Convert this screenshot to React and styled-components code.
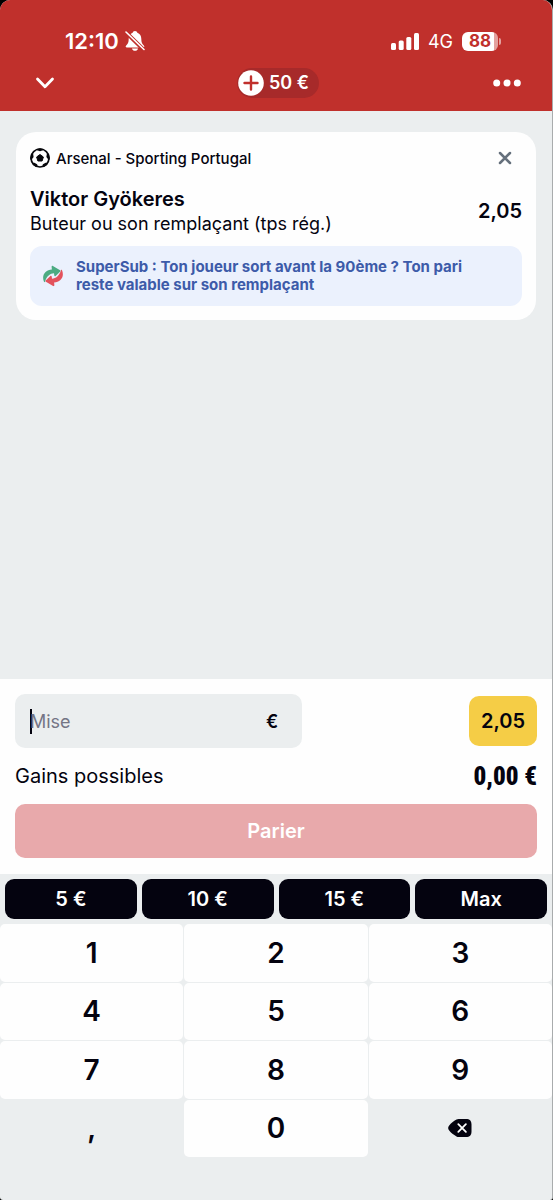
import React, { useState } from "react";
import styled, { createGlobalStyle, css } from "styled-components";

const colors = {
  red: "#c0302c",
  redDark: "#a72a2a",
  ink: "#04030f",
  grey: "#ebeeef",
  white: "#fefefe",
  slate: "#65707c",
  blue: "#3d5ba9",
  blueLight: "#ebf1fd",
  yellow: "#f5cd46",
  pink: "#e8a9ab",
};

const GlobalStyle = createGlobalStyle`
  *, *::before, *::after {
    box-sizing: border-box;
  }

  body {
    margin: 0;
    background: #000;
    color: ${colors.ink};
    font-family: Inter, "Liberation Sans", sans-serif;
  }

  button, input {
    font: inherit;
    color: inherit;
    border: 0;
    padding: 0;
    margin: 0;
    background: none;
  }

  button {
    cursor: pointer;
  }

  h2, p {
    margin: 0;
  }
`;

const flexCenter = css`
  display: flex;
  align-items: center;
  justify-content: center;
`;

const Screen = styled.div`
  display: flex;
  flex-direction: column;
  min-height: 100vh;
  overflow: hidden;
  background: ${colors.grey};
  border-right: 1px solid #a9acad;
  border-radius: 10px 10px 3px 3px;
`;

const Header = styled.header`
  background: ${colors.red};
  color: #fff;
  padding-top: 28px;
`;

const StatusBar = styled.div`
  display: flex;
  align-items: center;
  justify-content: space-between;
  height: 26px;
  padding: 0 54px 0 65px;
`;

const StatusGroup = styled.div`
  display: flex;
  align-items: center;
  gap: ${({ $gap }) => $gap}px;
`;

const Clock = styled.span`
  font-size: 22px;
  font-weight: 600;
`;

const Network = styled.span`
  font-size: 18px;
`;

const Battery = styled.span`
  ${flexCenter};
  position: relative;
  width: 36px;
  height: 19px;
  border-radius: 6px;
  background: linear-gradient(to right, #fff 32px, #e3a19f 32px);
  color: ${colors.red};
  font-size: 17px;
  font-weight: 700;

  &::after {
    content: "";
    position: absolute;
    right: -3px;
    top: 6px;
    width: 2px;
    height: 7px;
    border-radius: 0 2px 2px 0;
    background: #e3a19f;
  }
`;

const NavBar = styled.nav`
  display: grid;
  grid-template-columns: 1fr auto 1fr;
  align-items: center;
  height: 57px;
  padding: 0 31px 0 35px;
`;

const IconButton = styled.button`
  display: flex;
  justify-self: ${({ $end }) => ($end ? "end" : "start")};
  color: ${({ $muted }) => ($muted ? colors.slate : "inherit")};
`;

const Balance = styled.button`
  display: flex;
  align-items: center;
  gap: 5px;
  height: 30px;
  padding: 0 10px 0 1px;
  border-radius: 15px;
  background: ${colors.redDark};
  font-size: 18px;
  font-weight: 600;
`;

const Main = styled.main`
  flex: 1;
  padding: 21px 16px;
`;

const Card = styled.article`
  padding: 14px;
  border-radius: 20px;
  background: ${colors.white};
`;

const CardHeader = styled.div`
  display: flex;
  align-items: center;
  gap: 6px;
  height: 24px;
  padding-right: 10px;
  font-size: 15px;
  font-weight: 500;
`;

const Match = styled.span`
  flex: 1;
`;

const Selection = styled.div`
  display: flex;
  align-items: center;
  justify-content: space-between;
  padding: 16px 0 10px;
`;

const Player = styled.h2`
  font-size: 20px;
  line-height: 26px;
  font-weight: 600;
`;

const Market = styled.p`
  font-size: 18px;
  line-height: 24px;
`;

const Odds = styled.strong`
  font-size: 20px;
  font-weight: 600;
`;

const Info = styled.div`
  display: flex;
  align-items: center;
  gap: 12px;
  min-height: 60px;
  padding: 10px 32px 10px 12px;
  border-radius: 12px;
  background: ${colors.blueLight};
  color: ${colors.blue};
  font-size: 15px;
  line-height: 18px;
  font-weight: 700;

  svg {
    flex: none;
  }
`;

const Slip = styled.section`
  padding: 15px 15px 16px;
  background: ${colors.white};
`;

const StakeRow = styled.div`
  display: flex;
  align-items: center;
  justify-content: space-between;
`;

const StakeField = styled.label`
  display: flex;
  align-items: center;
  width: 55%;
  height: 54px;
  padding: 0 24px 0 15px;
  border-radius: 10px;
  background: ${colors.grey};
  font-size: 18px;
  font-weight: 600;
`;

const Caret = styled.span`
  width: 2px;
  height: 25px;
  margin-right: -2px;
  background: ${colors.ink};
`;

const StakeInput = styled.input`
  flex: 1;
  min-width: 0;
  outline: none;
  font-weight: 400;

  &::placeholder {
    color: #747585;
    opacity: 1;
  }
`;

const TotalOdds = styled.strong`
  ${flexCenter};
  min-width: 68px;
  height: 50px;
  border-radius: 10px;
  background: ${colors.yellow};
  font-size: 20px;
  font-weight: 600;
`;

const GainsRow = styled.div`
  display: flex;
  align-items: center;
  justify-content: space-between;
  height: 56px;
  font-size: 20px;
`;

const Gains = styled.output`
  font-family: "Roboto Condensed", "Open Sans Condensed", "Noto Sans Condensed",
    Roboto, sans-serif;
  font-size: 25px;
  font-weight: 900;
`;

const BetButton = styled.button`
  width: 100%;
  height: 54px;
  border-radius: 10px;
  background: ${colors.pink};
  color: #fff;
  font-size: 20px;
  font-weight: 600;
`;

const Keyboard = styled.section`
  padding-bottom: 43px;
`;

const QuickRow = styled.div`
  display: grid;
  grid-template-columns: repeat(4, 1fr);
  gap: 5px;
  padding: 5px;
`;

const QuickButton = styled.button`
  height: 40px;
  border-radius: 9px;
  background: ${colors.ink};
  color: #fff;
  font-size: 20px;
  font-weight: 600;
`;

const Keys = styled.div`
  display: grid;
  grid-template-columns: repeat(3, 1fr);
  grid-template-rows: repeat(4, 1fr);
  gap: 1px;
  height: 233px;
`;

const Key = styled.button`
  ${flexCenter};
  border-radius: 5px;
  background: ${({ $plain }) => ($plain ? "transparent" : colors.white)};
  font-size: 28px;
  font-weight: 600;
`;

const BellOff = () => (
  <svg width="20" height="22" viewBox="0 0 20 22" aria-hidden="true">
    <path
      d="M10 1c-1.300 0-2.100.8-2.300 1.700C5 3.700 3.700 6 3.700 8.700c0 3.900-.9 5.300-2.500 6.700-1 .9-.6 2 .7 2h16.200c1.300 0 1.700-1.100.7-2-1.600-1.400-2.500-2.800-2.500-6.700 0-2.700-1.300-5-4-6C12.100 1.800 11.300 1 10 1z"
      fill="#fff"
    />
    <path d="M7 18.500h6c-.3 1.500-1.500 2.300-3 2.300s-2.700-.8-3-2.300z" fill="#fff" />
    <path d="M0 1.500l19 18.500" stroke={colors.red} strokeWidth="4" />
    <path d="M1 2l18 17.500" stroke="#fff" strokeWidth="1.600" strokeLinecap="round" />
  </svg>
);

const Signal = () => (
  <svg width="28" height="17" viewBox="0 0 28 17" fill="#fff" aria-hidden="true">
    <rect x="0" y="10" width="5" height="7" rx="1.500" />
    <rect x="7.700" y="7.500" width="5" height="9.500" rx="1.500" />
    <rect x="15.300" y="4" width="5" height="13" rx="1.500" />
    <rect x="23" y="0" width="5" height="17" rx="1.500" />
  </svg>
);

const ChevronDown = () => (
  <svg width="20" height="12" viewBox="0 0 20 12" fill="none" aria-hidden="true">
    <path
      d="M2.500 2l7.500 7.800L17.500 2"
      stroke="#fff"
      strokeWidth="2.800"
      strokeLinecap="round"
      strokeLinejoin="round"
    />
  </svg>
);

const Dots = () => (
  <svg width="28" height="8" viewBox="0 0 28 8" fill="#fff" aria-hidden="true">
    <circle cx="3.700" cy="4" r="3.500" />
    <circle cx="14" cy="4" r="3.500" />
    <circle cx="24.300" cy="4" r="3.500" />
  </svg>
);

const PlusCircle = () => (
  <svg width="26" height="26" viewBox="0 0 26 26" aria-hidden="true">
    <circle cx="13" cy="13" r="12.800" fill="#fff" />
    <path
      d="M13 6.500v13M6.500 13h13"
      stroke={colors.red}
      strokeWidth="2.400"
      strokeLinecap="round"
    />
  </svg>
);

const Ball = () => (
  <svg width="20" height="20" viewBox="0 0 20 20" aria-hidden="true">
    <clipPath id="ball">
      <circle cx="10" cy="10" r="9.800" />
    </clipPath>
    <g clipPath="url(#ball)" fill="#08080c">
      <path
        d="M10 6.500l3.400 2.500-1.300 4H7.900L6.600 9z"
        stroke="#08080c"
        strokeLinejoin="round"
      />
      <path d="M6.200 0h7.600l-.8 2.200-3 1-3-1z" />
      <path d="M20 5.500v6.500l-1.700-.4-1.900-2.600.4-3z" />
      <path d="M0 5.500v6.500l1.700-.4 1.900-2.600-.4-3z" />
      <path d="M17.500 19.500l-5.300-.8.7-2.500 2.700-1.400 2.800.6z" />
      <path d="M2.500 19.500l5.300-.8-.7-2.500-2.700-1.400-2.800.6z" />
    </g>
    <circle cx="10" cy="10" r="9" fill="none" stroke="#08080c" strokeWidth="1.700" />
  </svg>
);

const Cross = () => (
  <svg width="14" height="14" viewBox="0 0 14 14" aria-hidden="true">
    <path
      d="M2 2l10 10M12 2L2 12"
      stroke="currentColor"
      strokeWidth="2.500"
      strokeLinecap="round"
    />
  </svg>
);

const arrowPath =
  "M2 16.800C-.8 10 3.500 5 9.900 4.400l-.3-2.600c-.1-.8.7-1.200 1.300-.8l7.200 4.200c.5.300.6.900.2 1.300l-4.700 4.400c-.6.500-1.200.2-1.300-.5l-.3-2.100C8.200 8.400 4.600 11.200 3 16.700c-.2.500-.8.600-1 .1z";

const SwapArrows = () => (
  <svg width="22" height="22" viewBox="0 0 22 22" aria-hidden="true">
    <path d={arrowPath} fill="#4cab82" />
    <path d={arrowPath} fill="#e3525c" transform="rotate(180 11 11)" />
  </svg>
);

const Backspace = () => (
  <svg width="24" height="18" viewBox="0 0 24 18" aria-hidden="true">
    <path
      d="M8.500.6C9.200.2 9.800 0 10.600 0H18c3.800 0 5.500 1.800 5.500 5.500v7c0 3.700-1.700 5.500-5.500 5.500h-7.400c-.8 0-1.400-.2-2.100-.6C5.500 15.700 3 13.800 1.200 11.500c-1.400-1.700-1.400-3.300 0-5C3 4.200 5.500 2.300 8.500.6z"
      fill={colors.ink}
    />
    <path
      d="M10.300 5.200l7.600 7.600M17.900 5.200l-7.600 7.600"
      stroke="#fff"
      strokeWidth="1.800"
      strokeLinecap="round"
    />
  </svg>
);

const quickStakes = ["5 €", "10 €", "15 €", "Max"];
const digits = ["1", "2", "3", "4", "5", "6", "7", "8", "9"];

const App = () => {
  const [stake, setStake] = useState("");

  const press = (key) => setStake((value) => value + key);

  return (
    <>
      <GlobalStyle />
      <Screen>
        <Header>
          <StatusBar>
            <StatusGroup $gap={6}>
              <Clock>12:10</Clock>
              <BellOff />
            </StatusGroup>
            <StatusGroup $gap={9}>
              <Signal />
              <Network>4G</Network>
              <Battery>88</Battery>
            </StatusGroup>
          </StatusBar>
          <NavBar>
            <IconButton aria-label="Fermer">
              <ChevronDown />
            </IconButton>
            <Balance>
              <PlusCircle />
              50 €
            </Balance>
            <IconButton $end aria-label="Plus">
              <Dots />
            </IconButton>
          </NavBar>
        </Header>

        <Main>
          <Card>
            <CardHeader>
              <Ball />
              <Match>Arsenal - Sporting Portugal</Match>
              <IconButton $muted aria-label="Supprimer">
                <Cross />
              </IconButton>
            </CardHeader>
            <Selection>
              <div>
                <Player>Viktor Gyökeres</Player>
                <Market>Buteur ou son remplaçant (tps rég.)</Market>
              </div>
              <Odds>2,05</Odds>
            </Selection>
            <Info>
              <SwapArrows />
              <p>
                SuperSub : Ton joueur sort avant la 90ème ? Ton pari reste
                valable sur son remplaçant
              </p>
            </Info>
          </Card>
        </Main>

        <Slip>
          <StakeRow>
            <StakeField>
              <Caret />
              <StakeInput
                placeholder="Mise"
                aria-label="Mise"
                inputMode="none"
                value={stake}
                onChange={(e) => setStake(e.target.value)}
              />
              €
            </StakeField>
            <TotalOdds>2,05</TotalOdds>
          </StakeRow>
          <GainsRow>
            <span>Gains possibles</span>
            <Gains>0,00 €</Gains>
          </GainsRow>
          <BetButton>Parier</BetButton>
        </Slip>

        <Keyboard>
          <QuickRow>
            {quickStakes.map((label) => (
              <QuickButton key={label}>{label}</QuickButton>
            ))}
          </QuickRow>
          <Keys>
            {digits.map((digit) => (
              <Key key={digit} onClick={() => press(digit)}>
                {digit}
              </Key>
            ))}
            <Key $plain onClick={() => press(",")}>
              ,
            </Key>
            <Key onClick={() => press("0")}>0</Key>
            <Key
              $plain
              aria-label="Effacer"
              onClick={() => setStake((value) => value.slice(0, -1))}
            >
              <Backspace />
            </Key>
          </Keys>
        </Keyboard>
      </Screen>
    </>
  );
};

export default App;
